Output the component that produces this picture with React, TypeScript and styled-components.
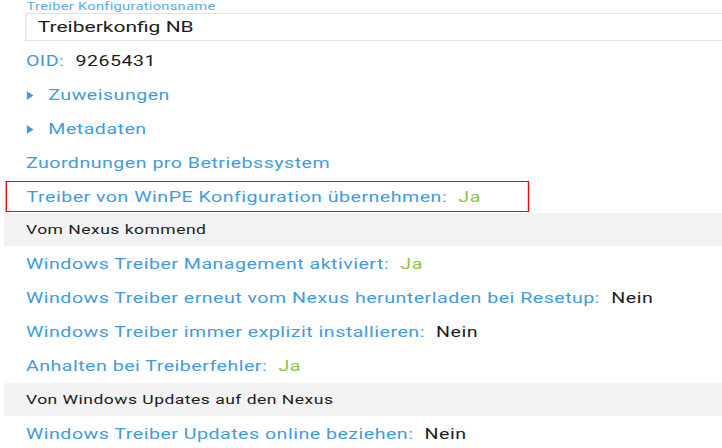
import React from "react";
import styled, { createGlobalStyle } from "styled-components";

const STRETCH = 1.4;

const GlobalStyle = createGlobalStyle`
  html, body {
    margin: 0;
    padding: 0;
    background: #fff;
    overflow: hidden;
  }
  body {
    font-family: Roboto, "Liberation Sans", Arial, sans-serif;
  }
`;

// the screenshot is horizontally stretched, so the whole sheet is laid out narrow and widened
const Sheet = styled.div`
  width: ${722 / STRETCH}px;
  transform: scaleX(${STRETCH});
  transform-origin: 0 0;
  display: flex;
  flex-direction: column;
  letter-spacing: 0.35px;
`;

const Field = styled.div`
  display: flex;
  flex-direction: column;
  padding-left: 18px;
  margin-bottom: 3px;
`;

const FieldLabel = styled.label`
  font-size: 10.5px;
  line-height: 13px;
  height: 13px;
  color: #5ea8e2;
  padding-left: 1px;
  letter-spacing: 0.2px;
`;

const InputBox = styled.div`
  height: 26px;
  border: 1px solid #e2e2e2;
  border-right: none;
  display: flex;
  align-items: center;
  padding-left: 8px;
  font-size: 15px;
  letter-spacing: 0;
  color: #1c1c1c;
`;

const Row = styled.div<{ $indent?: boolean }>`
  height: 34px;
  display: flex;
  align-items: center;
  padding-left: ${(p) => (p.$indent ? 14 : 18.5)}px;
  font-size: 14px;
  color: #3f9be0;
  white-space: nowrap;
`;

const Value = styled.span<{ $yes?: boolean }>`
  margin-left: 8px;
  color: ${(p) => (p.$yes ? "#8cc63f" : "#1c1c1c")};
`;

const Caret = styled.svg`
  width: 5px;
  height: 9px;
  margin-right: 11px;
  fill: #3f9be0;
`;

const Highlight = styled.div`
  margin: 1px 0 1px 4px;
  width: 372px;
  height: 29px;
  border: 1.5px solid #f00;
  display: flex;
  align-items: center;
`;

const Band = styled.div`
  margin: 0 0 1px 3px;
  height: 33px;
  background: #f2f2f2;
  display: flex;
  align-items: center;
  padding-left: 15.5px;
  font-size: 12.5px;
  color: #1c1c1c;
`;

const Expander: React.FC<{ title: string }> = ({ title }) => (
  <Row>
    <Caret viewBox="0 0 5 9">
      <polygon points="0,0 5,4.5 0,9" />
    </Caret>
    {title}
  </Row>
);

const Setting: React.FC<{ label: string; value: string }> = ({ label, value }) => (
  <Row>
    {label}:<Value $yes={value === "Ja"}>{value}</Value>
  </Row>
);

const App: React.FC = () => (
  <>
    <GlobalStyle />
    <Sheet>
      <Field>
        <FieldLabel>Treiber Konfigurationsname</FieldLabel>
        <InputBox>Treiberkonfig NB</InputBox>
      </Field>
      <Row>
        OID:<Value>9265431</Value>
      </Row>
      <Expander title="Zuweisungen" />
      <Expander title="Metadaten" />
      <Row>Zuordnungen pro Betriebssystem</Row>
      <Highlight>
        <Row $indent>
          Treiber von WinPE Konfiguration übernehmen:<Value $yes>Ja</Value>
        </Row>
      </Highlight>
      <Band>Vom Nexus kommend</Band>
      <Setting label="Windows Treiber Management aktiviert" value="Ja" />
      <Setting label="Windows Treiber erneut vom Nexus herunterladen bei Resetup" value="Nein" />
      <Setting label="Windows Treiber immer explizit installieren" value="Nein" />
      <Setting label="Anhalten bei Treiberfehler" value="Ja" />
      <Band>Von Windows Updates auf den Nexus</Band>
      <Setting label="Windows Treiber Updates online beziehen" value="Nein" />
    </Sheet>
  </>
);

export default App;
